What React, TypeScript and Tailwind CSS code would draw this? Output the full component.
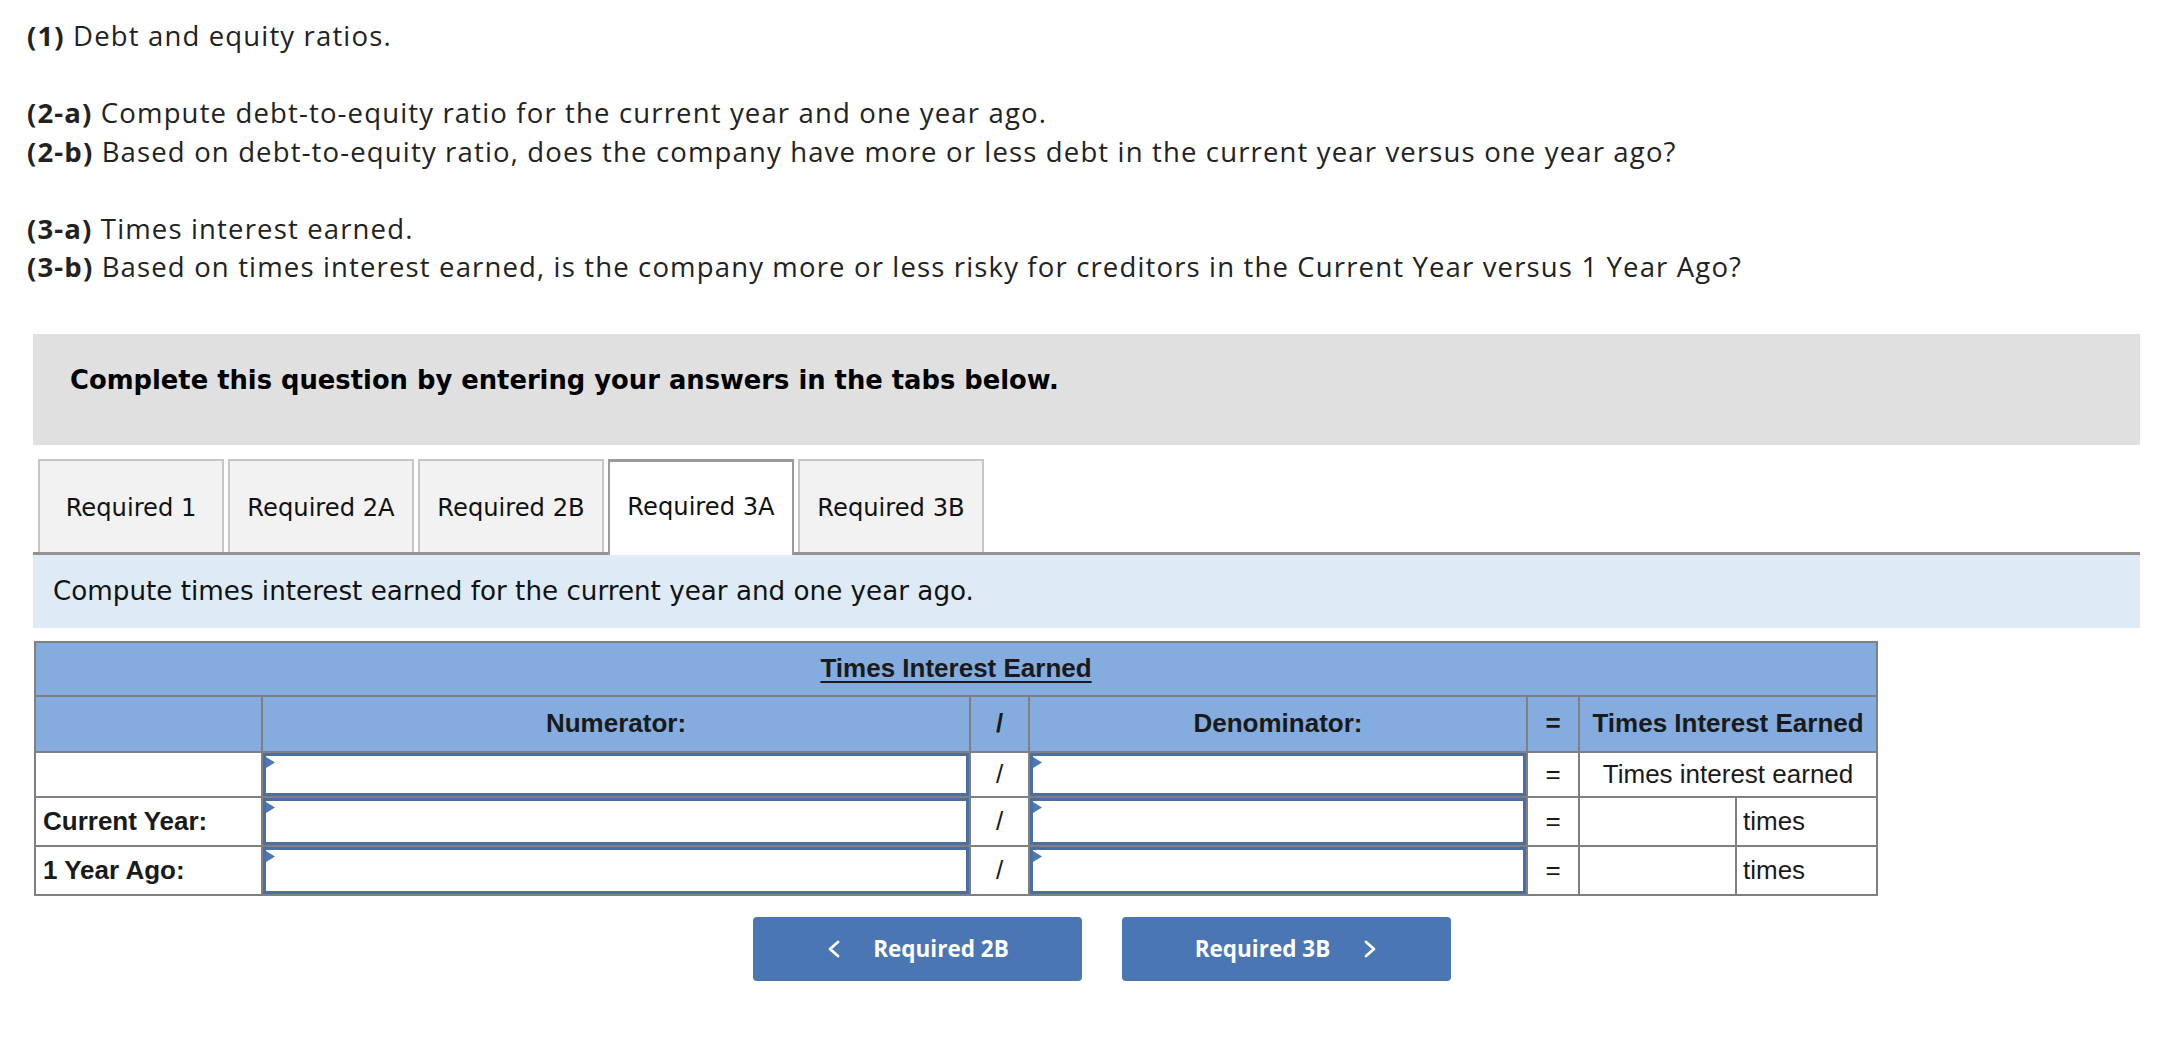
import React from "react";

const Marker = () => (
  <svg
    className="absolute left-[0px] top-[1px]"
    width="10"
    height="12"
    viewBox="0 0 10 12"
  >
    <polygon points="0,0 9,5.5 0,11" fill="#4a78b9" />
  </svg>
);

function InputCell({ h }: { h: string }) {
  return (
    <td className="p-0 border-2 border-[#808080] bg-white">
      <div className={`relative w-full border-[3px] border-[#4b6fa3] bg-white ${h}`}>
        <Marker />
      </div>
    </td>
  );
}

const cell = "border-2 border-[#808080]";

export default function App() {
  return (
    <div className="min-h-screen bg-white pb-[60px]">
      <div className="pl-[27px] pt-[17px] text-[27.5px] tracking-[1.15px] leading-[38.5px] text-[#222222] font-['Open_Sans',sans-serif]">
        <p>
          <b className="font-bold">(1)</b> Debt and equity ratios.
        </p>
        <p>&nbsp;</p>
        <p>
          <b className="font-bold">(2-a)</b> Compute debt-to-equity ratio for the current year and one year ago.
        </p>
        <p>
          <b className="font-bold">(2-b)</b> Based on debt-to-equity ratio, does the company have more or less debt in the current year versus one year ago?
        </p>
        <p>&nbsp;</p>
        <p>
          <b className="font-bold">(3-a)</b> Times interest earned.
        </p>
        <p>
          <b className="font-bold">(3-b)</b> Based on times interest earned, is the company more or less risky for creditors in the Current Year versus 1 Year Ago?
        </p>
      </div>

      <div className="ml-[33px] w-[2107px] mt-[47px]">
        <div className="h-[111px] bg-[#e0e0e0] pl-[37px] pt-[30px] text-[25.8px] leading-[32px] font-bold text-black font-['DejaVu_Sans',sans-serif]">
          Complete this question by entering your answers in the tabs below.
        </div>

        <div className="mt-[14px] flex items-start gap-[4px] pl-[5px] h-[96px] border-b-[3px] border-[#939393] font-['DejaVu_Sans',sans-serif] text-[24.2px] text-[#111]">
          {["Required 1", "Required 2A", "Required 2B"].map((t) => (
            <div
              key={t}
              className="w-[186px] h-[93px] flex items-center justify-center pt-[4px] bg-[#f2f2f2] border-2 border-b-0 border-[#c6c6c6]"
            >
              {t}
            </div>
          ))}
          <div className="relative w-[186px] h-[96px] -mb-[3px] flex items-center justify-center pb-[2px] bg-white border-2 border-t-[3px] border-b-0 border-[#9a9a9a]">
            Required 3A
          </div>
          <div className="w-[186px] h-[93px] flex items-center justify-center pt-[4px] bg-[#f2f2f2] border-2 border-b-0 border-[#c6c6c6]">
            Required 3B
          </div>
        </div>

        <div className="h-[73px] bg-[#deebf7] flex items-center pl-[20px] pt-[2px] font-['DejaVu_Sans',sans-serif] text-[26.2px] text-[#111]">
          Compute times interest earned for the current year and one year ago.
        </div>

        <table className="mt-[13px] ml-[1px] table-fixed border-collapse w-[1844px] font-['Liberation_Sans',Arial,sans-serif] text-[26px] text-[#1a1a1a]">
          <colgroup>
            <col className="w-[227px]" />
            <col className="w-[708px]" />
            <col className="w-[59px]" />
            <col className="w-[498px]" />
            <col className="w-[52px]" />
            <col className="w-[157px]" />
            <col className="w-[141px]" />
          </colgroup>
          <tbody>
            <tr className="h-[54px] bg-[#84acdf]">
              <td colSpan={7} className={`${cell} text-center font-bold`}>
                <span className="underline underline-offset-[4px] decoration-2">Times Interest Earned</span>
              </td>
            </tr>
            <tr className="h-[56px] bg-[#84acdf] font-bold">
              <td className={cell}></td>
              <td className={`${cell} text-center`}>Numerator:</td>
              <td className={`${cell} text-center`}>/</td>
              <td className={`${cell} text-center`}>Denominator:</td>
              <td className={`${cell} text-center`}>=</td>
              <td colSpan={2} className={`${cell} text-center`}>
                Times Interest Earned
              </td>
            </tr>
            <tr className="bg-white">
              <td className={cell}></td>
              <InputCell h="h-[43px]" />
              <td className={`${cell} text-center`}>/</td>
              <InputCell h="h-[43px]" />
              <td className={`${cell} text-center`}>=</td>
              <td colSpan={2} className={`${cell} text-center`}>
                Times interest earned
              </td>
            </tr>
            <tr className="bg-white">
              <td className={`${cell} pl-[7px] font-bold`}>Current Year:</td>
              <InputCell h="h-[47px]" />
              <td className={`${cell} text-center`}>/</td>
              <InputCell h="h-[47px]" />
              <td className={`${cell} text-center`}>=</td>
              <td className={cell}></td>
              <td className={`${cell} pl-[6px]`}>times</td>
            </tr>
            <tr className="bg-white">
              <td className={`${cell} pl-[7px] font-bold`}>1 Year Ago:</td>
              <InputCell h="h-[47px]" />
              <td className={`${cell} text-center`}>/</td>
              <InputCell h="h-[47px]" />
              <td className={`${cell} text-center`}>=</td>
              <td className={cell}></td>
              <td className={`${cell} pl-[6px]`}>times</td>
            </tr>
          </tbody>
        </table>

        <div className="mt-[21px] ml-[720px] flex gap-[40px] font-['Open_Sans',sans-serif] text-[22.5px] font-bold text-white">
          <button className="w-[329px] h-[64px] rounded-[4px] bg-[#4a76b4] flex items-center justify-center gap-[32px]">
            <svg width="15" height="18" viewBox="0 0 15 18">
              <polyline
                points="12,2 4,9 12,16"
                fill="none"
                stroke="white"
                strokeWidth="2.8"
                strokeLinecap="round"
                strokeLinejoin="round"
              />
            </svg>
            <span>Required 2B</span>
          </button>
          <button className="w-[329px] h-[64px] rounded-[4px] bg-[#4a76b4] flex items-center justify-center gap-[33px]">
            <span>Required 3B</span>
            <svg width="15" height="18" viewBox="0 0 15 18">
              <polyline
                points="3,2 11,9 3,16"
                fill="none"
                stroke="white"
                strokeWidth="2.8"
                strokeLinecap="round"
                strokeLinejoin="round"
              />
            </svg>
          </button>
        </div>
      </div>
    </div>
  );
}
